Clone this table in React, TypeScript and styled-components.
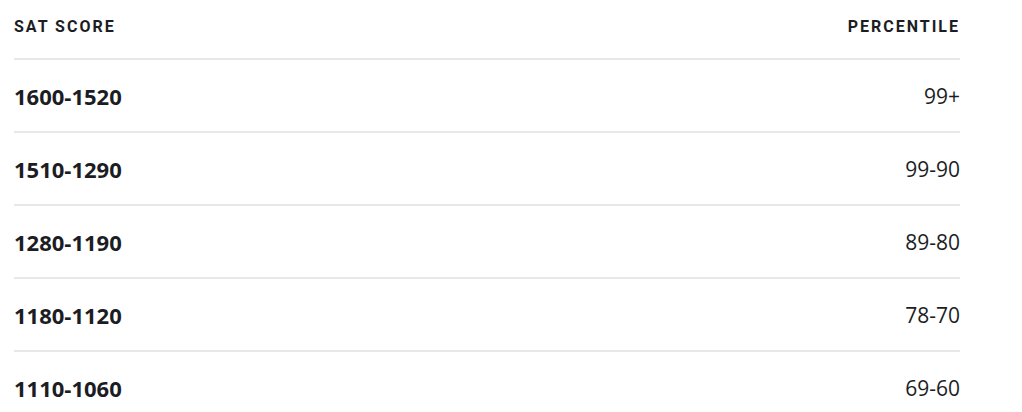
import React from "react";
import styled, { createGlobalStyle } from "styled-components";

type Row = {
  score: string;
  percentile: string;
};

const rows: Row[] = [
  { score: "1600-1520", percentile: "99+" },
  { score: "1510-1290", percentile: "99-90" },
  { score: "1280-1190", percentile: "89-80" },
  { score: "1180-1120", percentile: "78-70" },
  { score: "1110-1060", percentile: "69-60" },
];

const App: React.FC = (): JSX.Element => {
  return (
    <>
      <GlobalStyle />
      <Page>
        <Table>
          <thead>
            <tr>
              <HeadCell>SAT Score</HeadCell>
              <HeadCell align="right">Percentile</HeadCell>
            </tr>
          </thead>
          <tbody>
            {rows.map((row) => (
              <BodyRow key={row.score}>
                <ScoreCell>{row.score}</ScoreCell>
                <PercentCell>{row.percentile}</PercentCell>
              </BodyRow>
            ))}
          </tbody>
        </Table>
      </Page>
    </>
  );
};

const GlobalStyle = createGlobalStyle`
  body {
    margin: 0;
    background: #ffffff;
  }
`;

const Page = styled.div`
  padding: 0 62px 0 14px;
`;

const Table = styled.table`
  width: 946px;
  border-collapse: collapse;
  color: #1c1d24;
`;

const HeadCell = styled.th<{ align?: "left" | "right" }>`
  height: 52px;
  padding: 0 0 6px;
  text-align: ${({ align }) => align ?? "left"};
  font-family: Roboto, "Liberation Sans", sans-serif;
  font-size: 16px;
  font-weight: 700;
  letter-spacing: 2px;
  text-transform: uppercase;
  border-bottom: 2px solid #e8e8e8;
  vertical-align: middle;
`;

const BodyRow = styled.tr`
  height: 73px;

  &:not(:last-child) td {
    border-bottom: 2px solid #e8e8e8;
  }
`;

const ScoreCell = styled.td`
  padding: 0;
  font-family: "Open Sans", "Liberation Sans", sans-serif;
  font-size: 22px;
  font-weight: 700;
  vertical-align: middle;
`;

const PercentCell = styled.td`
  padding: 0;
  text-align: right;
  font-family: "Open Sans", "Liberation Sans", sans-serif;
  font-size: 21px;
  font-weight: 400;
  vertical-align: middle;
`;

export default App;
